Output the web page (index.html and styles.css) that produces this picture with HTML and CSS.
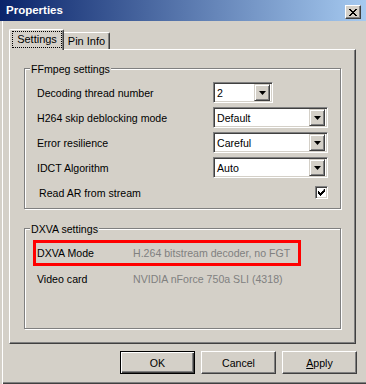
FILE: index.html
```html
<!DOCTYPE html>
<html>
<head>
<meta charset="utf-8">
<title>Properties</title>
<link rel="stylesheet" href="styles.css">
</head>
<body>
<div class="window">
  <div class="titlebar">
    <span class="title">Properties</span>
    <div class="close">
      <svg width="8" height="7" viewBox="0 0 8 7"><path d="M0 0h2v1h-2z M6 0h2v1h-2z M1 1h2v1h-2z M5 1h2v1h-2z M2 2h4v1h-4z M3 3h2v1h-2z M2 4h4v1h-4z M1 5h2v1h-2z M5 5h2v1h-2z M0 6h2v1h-2z M6 6h2v1h-2z" fill="#000"/></svg>
    </div>
  </div>
  <div class="tabs">
    <div class="tab active"><span class="focus">Settings</span></div>
    <div class="tab inactive">Pin Info</div>
  </div>
  <div class="panel">
    <div class="group ffmpeg">
      <div class="legend">FFmpeg settings</div>
      <div class="ff-grid">
        <span class="label">Decoding thread number</span>
        <div class="combo small"><span class="combo-text">2</span><span class="drop"><svg width="7" height="4" viewBox="0 0 7 4"><path d="M0 0h7l-3.5 4z" fill="#000"/></svg></span></div>
        <span class="label">H264 skip deblocking mode</span>
        <div class="combo wide"><span class="combo-text">Default</span><span class="drop"><svg width="7" height="4" viewBox="0 0 7 4"><path d="M0 0h7l-3.5 4z" fill="#000"/></svg></span></div>
        <span class="label">Error resilience</span>
        <div class="combo wide"><span class="combo-text">Careful</span><span class="drop"><svg width="7" height="4" viewBox="0 0 7 4"><path d="M0 0h7l-3.5 4z" fill="#000"/></svg></span></div>
        <span class="label">IDCT Algorithm</span>
        <div class="combo wide"><span class="combo-text">Auto</span><span class="drop"><svg width="7" height="4" viewBox="0 0 7 4"><path d="M0 0h7l-3.5 4z" fill="#000"/></svg></span></div>
        <span class="label indent">Read AR from stream</span>
        <div class="check"><svg width="7" height="7" viewBox="0 0 7 7"><path d="M6 0h1v3h-1v1h-1v1h-1v1h-1v1h-1v-1h-1v-1h-1v-3h1v1h1v1h1v-1h1v-1h1z" fill="#000"/></svg></div>
      </div>
    </div>
    <div class="group dxva">
      <div class="legend">DXVA settings</div>
      <div class="dx-rows">
        <div class="dx-row hl"><span class="dx-label">DXVA Mode</span><span class="dx-value">H.264 bitstream decoder, no FGT</span></div>
        <div class="dx-row"><span class="dx-label">Video card</span><span class="dx-value">NVIDIA nForce 750a SLI (4318)</span></div>
      </div>
    </div>
  </div>
  <div class="buttons">
    <div class="btn default">OK</div>
    <div class="btn">Cancel</div>
    <div class="btn"><span><u>A</u>pply</span></div>
  </div>
</div>
</body>
</html>
```
FILE: styles.css
```css
* { box-sizing: border-box; }
html, body { margin: 0; padding: 0; }
body {
  font-family: "Liberation Sans", Arial, sans-serif;
  font-size: 10.6px;
  color: #000;
  background: #d4d0c8;
}
.window {
  width: 366px;
  height: 384px;
  overflow: hidden;
  background: #d4d0c8;
  box-shadow: inset 2px 0 0 #d4d0c8, inset 3px 0 0 #fff, inset 0 -1px 0 #404040, inset 0 -2px 0 #808080;
}
.titlebar {
  height: 21px;
  background: linear-gradient(to right, #0a246a, #a6caf0);
  display: flex;
  align-items: flex-start;
  justify-content: space-between;
  padding: 0 5px 0 6px;
}
.title {
  color: #fff;
  font-weight: bold;
  font-size: 11.5px;
  line-height: 21px;
}
.close {
  width: 16px;
  height: 14px;
  margin-top: 5px;
  background: #d4d0c8;
  border: 1px solid;
  border-color: #fff #404040 #404040 #fff;
  box-shadow: inset -1px -1px 0 #808080;
  display: flex;
  align-items: center;
  justify-content: center;
}
.close svg { display: block; }
.tabs {
  display: flex;
  align-items: flex-end;
  height: 20px;
  margin: 8px 0 0 9px;
}
.tab {
  background: #d4d0c8;
  border: 1px solid;
  border-color: #fff #404040 transparent #fff;
  border-bottom: none;
  box-shadow: inset -1px 0 0 #808080;
  border-top-left-radius: 2px;
  border-top-right-radius: 2px;
}
.tab.active {
  position: relative;
  z-index: 1;
  width: 55px;
  height: 21px;
  margin-bottom: -1px;
  padding: 1px 1px 0 2px;
  font-size: 11px;
}
.focus {
  display: block;
  height: 17px;
  line-height: 15px;
  border: 1px dotted #000;
  text-align: center;
}
.tab.inactive {
  width: 46px;
  height: 17px;
  border-left: none;
  border-top-left-radius: 0;
  line-height: 16px;
  text-align: center;
  font-size: 11px;
}
.panel {
  width: 347px;
  height: 295px;
  margin-left: 9px;
  border: 1px solid;
  border-color: #fff #404040 #404040 #fff;
  box-shadow: inset -1px -1px 0 #808080;
  padding: 18px 0 0 14px;
}
.group {
  width: 317px;
  border: 1px solid #808080;
  box-shadow: inset 1px 1px 0 #fff, 1px 1px 0 #fff;
}
.ffmpeg { height: 141px; }
.dxva { height: 101px; margin-top: 19px; }
.legend {
  display: block;
  width: max-content;
  height: 13px;
  line-height: 13px;
  margin: -6px 0 -7px 5px;
  padding: 0 1px;
  background: #d4d0c8;
}
.ff-grid {
  display: grid;
  grid-template-columns: 176px 115px;
  grid-auto-rows: 21px;
  row-gap: 4px;
  align-items: center;
  margin: 13px 0 0 12px;
}
.label.indent { padding-left: 2px; }
.combo {
  height: 21px;
  border: 1px solid;
  border-color: #808080 #fff #fff #808080;
  box-shadow: inset 1px 1px 0 #404040, inset -1px -1px 0 #d4d0c8;
  background: #fff;
  display: flex;
  align-items: center;
  padding: 2px;
}
.combo.small { width: 60px; }
.combo.wide { width: 115px; }
.combo-text { flex: 1; padding-left: 1px; }
.drop {
  width: 16px;
  height: 17px;
  background: #d4d0c8;
  border: 1px solid;
  border-color: #d4d0c8 #404040 #404040 #d4d0c8;
  box-shadow: inset 1px 1px 0 #fff, inset -1px -1px 0 #808080;
  display: flex;
  align-items: center;
  justify-content: center;
}
.drop svg, .check svg { display: block; }
.check {
  justify-self: end;
  width: 13px;
  height: 13px;
  border: 1px solid;
  border-color: #808080 #fff #fff #808080;
  box-shadow: inset 1px 1px 0 #404040, inset -1px -1px 0 #d4d0c8;
  background: #fff;
  display: flex;
  align-items: center;
  justify-content: center;
}
.dx-rows { margin: 11px 0 0 8px; }
.dx-row {
  width: 268px;
  height: 26px;
  border: 3px solid transparent;
  display: flex;
  align-items: center;
  padding-left: 1px;
}
.dx-row.hl { border-color: #ff0000; }
.dx-label { width: 96px; }
.dx-value { color: #808080; }
.buttons {
  display: flex;
  justify-content: flex-end;
  gap: 6px;
  margin-top: 7px;
  padding-right: 9px;
}
.btn {
  width: 75px;
  height: 23px;
  display: flex;
  align-items: center;
  justify-content: center;
  border: 1px solid;
  border-color: #fff #404040 #404040 #fff;
  box-shadow: inset -1px -1px 0 #808080;
}
.btn.default {
  border-color: #000;
  box-shadow: inset 1px 1px 0 #fff, inset -1px -1px 0 #404040, inset -2px -2px 0 #808080;
}
```
